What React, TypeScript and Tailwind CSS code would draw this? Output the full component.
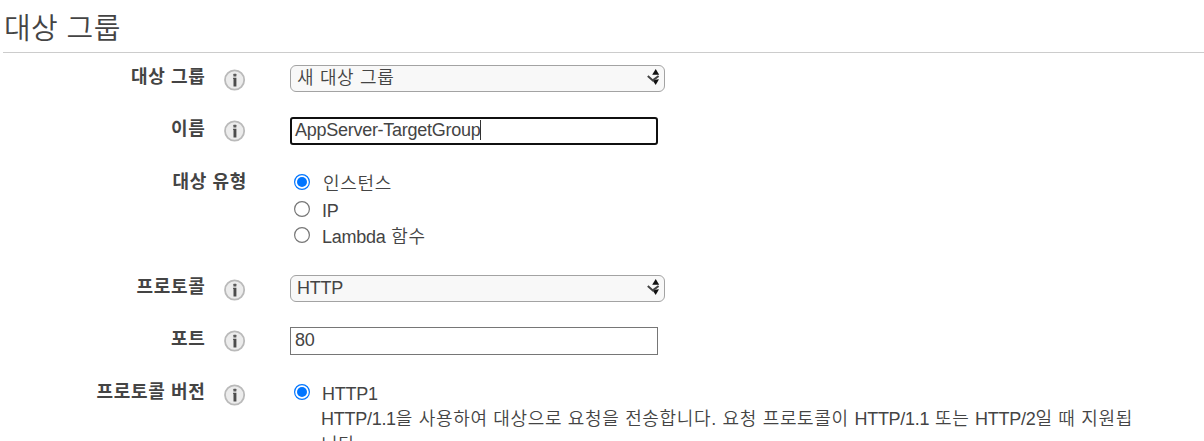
import type { ReactNode } from 'react';

function K({ children, className = '' }: { children: ReactNode; className?: string }) {
  return <span className={`text-[18px] tracking-[0.66px] ${className}`}>{children}</span>;
}

function InfoIcon() {
  return (
    <svg className="block h-[22px] w-[22px] shrink-0" viewBox="0 0 22 22">
      <circle cx="10.6" cy="11" r="9.6" fill="#ececec" stroke="#bababa" strokeWidth="1.8" />
      <rect x="9.4" y="4.8" width="3" height="2.7" rx="0.5" fill="#5c5c5c" />
      <path d="M9.1 8.8H12.4V17.4H9.5V10H9.1Z" fill="#4c4c4c" />
    </svg>
  );
}

function Arrows() {
  return (
    <svg className="mt-px block h-[20px] w-[14px] shrink-0" viewBox="0 0 14 20">
      <path d="M8.7 2L12.2 7.8H5.2Z" fill="#111" />
      <path d="M8.7 18L5.4 13L12 12.2Z" fill="#111" />
      <path d="M0.8 9L5.8 13.4L11.6 9" fill="none" stroke="#444" strokeWidth="2" />
    </svg>
  );
}

function Row({ label, height, iconTop, children }: { label: string; height: string; iconTop?: string; children: ReactNode }) {
  return (
    <div className={`flex shrink-0 ${height}`}>
      <div className={`shrink-0 pt-[11px] text-right font-bold leading-[27px] ${iconTop ? 'w-[206px] pr-[0.5px]' : 'w-[247px]'}`}>
        <K>{label}</K>
      </div>
      {iconTop && (
        <div className={`w-[41px] shrink-0 pl-[18px] ${iconTop}`}>
          <InfoIcon />
        </div>
      )}
      <div className="ml-[43px] min-w-0 flex-1 pt-3">{children}</div>
    </div>
  );
}

function Select({ children }: { children: ReactNode }) {
  return (
    <div className="flex h-[27px] w-[375px] items-start justify-between rounded-[6px] border border-[#a3a3a3] bg-[#f8f8f8] pl-[6px] pr-[3px] leading-[25px]">
      <span>{children}</span>
      <Arrows />
    </div>
  );
}

function Radio({ checked = false, className = '', children }: { checked?: boolean; className?: string; children: ReactNode }) {
  return (
    <div className={`flex ${className}`}>
      <svg className="ml-1 mt-[4px] h-4 w-4 shrink-0" viewBox="0 0 16 16" role="radio" aria-checked={checked}>
        <circle cx="8" cy="8" r="7.4" fill="#fff" stroke={checked ? '#0075ff' : '#767676'} strokeWidth="1.2" />
        {checked && <circle cx="8" cy="8" r="5" fill="#0075ff" />}
      </svg>
      <span className="ml-3 leading-[28px]">{children}</span>
    </div>
  );
}

export default function App() {
  return (
    <div className="flex h-[441px] w-[1204px] flex-col overflow-hidden bg-white font-['Liberation_Sans','Noto_Sans_CJK_KR',sans-serif] text-[18px] font-[350] tracking-[-0.27px] text-[#444]">
      <h2 className="ml-[3px] h-[53px] shrink-0 border-b border-[#ccc] pl-px pt-[9px] text-[29px] font-[350] leading-[40px] tracking-[0.4px]">대상 그룹</h2>
      <Row label="대상 그룹" height="h-[52px]" iconTop="pt-[16px]">
        <Select><K>새 대상 그룹</K></Select>
      </Row>
      <Row label="이름" height="h-[53px]" iconTop="pt-[15px]">
        <div className="flex h-[28px] w-[368px] rounded-[3px] border-2 border-[#101010] pl-[3px] leading-[22px]">
          <span>AppServer-TargetGroup</span>
          <span className="mt-[1px] h-5 w-px bg-[#333]" />
        </div>
      </Row>
      <Row label="대상 유형" height="h-[105px]">
        <Radio checked className="h-[27px]"><K className="pl-px tracking-[0.9px]">인스턴스</K></Radio>
        <Radio className="h-[26px]">IP</Radio>
        <Radio>Lambda <K className="pl-px">함수</K></Radio>
      </Row>
      <Row label="프로토콜" height="h-[52px]" iconTop="pt-[16px]">
        <Select>HTTP</Select>
      </Row>
      <Row label="포트" height="h-[53px]" iconTop="pt-[15px]">
        <div className="h-[28px] w-[368px] border border-[#767676] pl-[4px] leading-[24px]">80</div>
      </Row>
      <Row label="프로토콜 버전" height="h-[73px]" iconTop="pt-[16px]">
        <Radio checked className="h-[26px]">HTTP1</Radio>
        <p className="ml-[31px] w-[850px] leading-[26px]">
          HTTP/1.1<K>을 사용하여 대상으로 요청을 전송합니다. 요청 프로토콜이 </K>HTTP/1.1<K> 또는 </K>HTTP/2<K>일 때 지원됩</K>
          <br />
          <K>니다.</K>
        </p>
      </Row>
    </div>
  );
}
